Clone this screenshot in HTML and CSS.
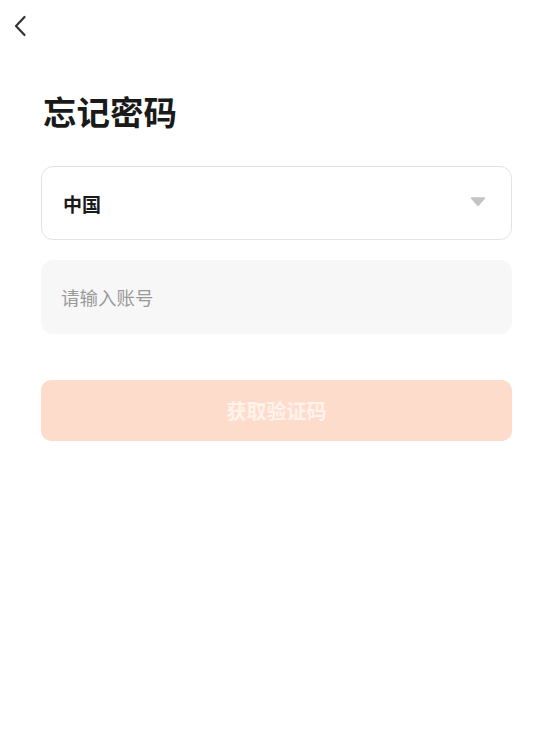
FILE: index.html
```html
<!DOCTYPE html>
<html lang="zh-CN">
<head>
<meta charset="utf-8">
<title>忘记密码</title>
<link rel="stylesheet" href="styles.css">
</head>
<body>
<div class="page">
  <header class="topbar">
    <button class="back" aria-label="返回">
      <svg width="14" height="22" viewBox="0 0 14 22"><path d="M11.5 2 L3 11 L11.5 20" fill="none" stroke="#333" stroke-width="2.2" stroke-linecap="round" stroke-linejoin="round"/></svg>
    </button>
  </header>
  <main class="content">
    <h1 class="title">忘记密码</h1>
    <div class="select">
      <span class="select-value">中国</span>
      <svg class="caret" width="16" height="10" viewBox="0 0 16 10"><path d="M1.5 1 H14.5 L8 8.5 Z" fill="#c4c4c4" stroke="#c4c4c4" stroke-width="1.5" stroke-linejoin="round"/></svg>
    </div>
    <div class="field">
      <input class="field-input" type="text" placeholder="请输入账号">
    </div>
    <button class="submit" disabled>获取验证码</button>
  </main>
</div>
</body>
</html>
```
FILE: styles.css
```css
* { box-sizing: border-box; }
html, body {
  margin: 0;
  padding: 0;
  background: #ffffff;
  font-family: "Noto Sans CJK SC", "Noto Sans", sans-serif;
}
.page {
  width: 548px;
  min-height: 749px;
}
.topbar {
  height: 52px;
  display: flex;
  align-items: flex-start;
  padding: 15px 0 0 13px;
}
.back {
  border: 0;
  background: none;
  padding: 0;
  width: 14px;
  height: 22px;
  display: block;
}
.content {
  padding: 0 36px 0 41px;
}
.title {
  margin: 36px 0 0 2px;
  font-size: 33.5px;
  line-height: 46px;
  font-weight: 700;
  color: #1a1a1a;
  letter-spacing: 0;
}
.select {
  margin-top: 32px;
  height: 74px;
  border: 1px solid #e3e3e3;
  border-radius: 12px;
  display: flex;
  align-items: center;
  justify-content: space-between;
  padding: 0 25px 0 21px;
}
.select-value {
  font-size: 19px;
  font-weight: 700;
  color: #1a1a1a;
}
.caret { display: block; margin-top: -2px; }
.field {
  margin-top: 20px;
  height: 74px;
  background: #f7f7f7;
  border-radius: 12px;
  display: flex;
  align-items: center;
  padding: 0 20px;
}
.field-input {
  border: 0;
  outline: 0;
  background: transparent;
  width: 100%;
  font-family: inherit;
  font-size: 18.5px;
  color: #333;
  padding: 0;
}
.field-input::placeholder { color: #9a9a9a; }
.submit {
  margin-top: 46px;
  display: block;
  width: 100%;
  height: 61px;
  border: 0;
  border-radius: 10px;
  background: #fedccb;
  color: #fff3ec;
  font-family: inherit;
  font-size: 20px;
  font-weight: 700;
}
```
